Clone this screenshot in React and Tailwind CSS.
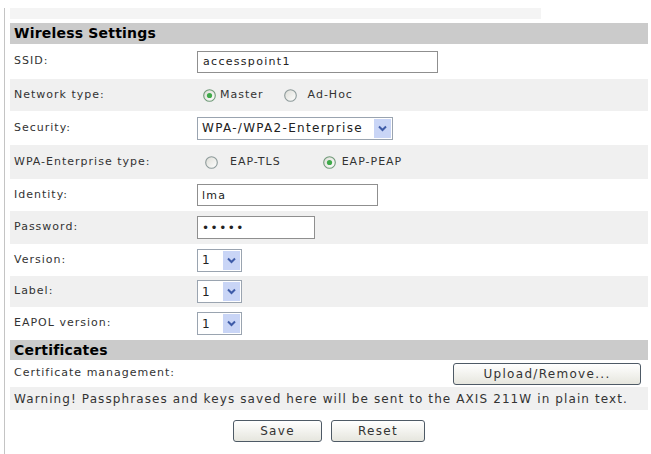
import React from 'react';

const font = { fontFamily: '"DejaVu Sans", Verdana, sans-serif' };

// XP style radio, drawn since native ones differ
const Radio = ({ checked }) => (
  <svg width="13" height="13" viewBox="0 0 13 13" className="shrink-0">
    <defs>
      <linearGradient id="rg" x1="0" y1="0" x2="1" y2="1">
        <stop offset="0" stopColor="#dcdcd6" />
        <stop offset="1" stopColor="#ffffff" />
      </linearGradient>
    </defs>
    <circle cx="6.5" cy="6.5" r="5.8" fill="url(#rg)" stroke={checked ? '#6f9a78' : '#8d9a9a'} strokeWidth="1.1" />
    {checked && <circle cx="6.5" cy="6.5" r="2.6" fill="#3faa4a" />}
  </svg>
);

const Select = ({ value, width }) => (
  <div className={`flex items-stretch h-[23px] border border-[#9aa4b0] bg-white ${width}`}>
    <span className="flex-1 flex items-center pl-[4px] text-[12px] tracking-[1.3px] text-[#222]">{value}</span>
    <span className="w-[17px] m-[1px] flex items-center justify-center bg-[#c9d5f6]">
      <svg width="9" height="7" viewBox="0 0 9 7">
        <path d="M1 1.5 L4.5 5 L8 1.5" fill="none" stroke="#3f5ca8" strokeWidth="2" />
      </svg>
    </span>
  </div>
);

const Button = ({ children, width }) => (
  <button className={`h-[22px] ${width} rounded-[3px] border border-[#4e5a66] bg-gradient-to-b from-white to-[#e6e6de] text-[12px] tracking-[1.3px] text-[#333]`}>
    {children}
  </button>
);

const Row = ({ label, shade, h, children }) => (
  <div className={`flex items-center ${h} ${shade ? 'bg-[#f0f0f0]' : 'bg-white'}`}>
    <div className="w-[187px] pl-[4px] text-[11px] tracking-[1px] text-[#333]">{label}</div>
    <div className="flex items-center">{children}</div>
  </div>
);

const Header = ({ children, h }) => (
  <div className={`flex items-center ${h} bg-[#cbcbcb] pl-[4px] text-[14px] font-bold tracking-[0.2px] text-black`}>
    {children}
  </div>
);

export default function App() {
  return (
    <div className="w-[651px] h-[454px] bg-white overflow-hidden" style={font}>
      <div className="ml-[4px] mt-[8px] h-[446px] border-l border-[#c4c4c4] pl-[5px] pr-[3px]">
        <div className="mt-[1px] h-[11px] w-[531px] bg-[#f4f4f4]" />
        <div className="mt-[4px]">
          <Header h="h-[21px]">Wireless Settings</Header>

          <Row label="SSID:" h="h-[35px]">
            <input
              readOnly
              value="accesspoint1"
              className="w-[241px] h-[22px] border border-[#8f8f8f] px-[5px] text-[11px] tracking-[1.3px] text-[#222] outline-none"
            />
          </Row>

          <Row label="Network type:" shade h="h-[32px]">
            <div className="flex items-center ml-[6px] text-[11px] tracking-[1px] text-[#333]">
              <Radio checked />
              <span className="ml-[4px]">Master</span>
              <span className="ml-[20px]"><Radio /></span>
              <span className="ml-[11px]">Ad-Hoc</span>
            </div>
          </Row>

          <Row label="Security:" h="h-[34px]">
            <Select value="WPA-/WPA2-Enterprise" width="w-[196px]" />
          </Row>

          <Row label="WPA-Enterprise type:" shade h="h-[34px]">
            <div className="flex items-center ml-[8px] text-[11px] tracking-[1px] text-[#333]">
              <Radio />
              <span className="ml-[12px]">EAP-TLS</span>
              <span className="ml-[42px]"><Radio checked /></span>
              <span className="ml-[6px]">EAP-PEAP</span>
            </div>
          </Row>

          <Row label="Identity:" h="h-[32px]">
            <input
              readOnly
              value="lma"
              className="w-[181px] h-[22px] border border-[#8f8f8f] px-[4px] text-[11px] tracking-[1.3px] text-[#222] outline-none"
            />
          </Row>

          <Row label="Password:" shade h="h-[33px]">
            <input
              readOnly
              type="password"
              value="abcde"
              className="w-[118px] h-[23px] border border-[#8f8f8f] bg-white px-[4px] text-[12px] tracking-[1.5px] text-[#222] outline-none"
            />
          </Row>

          <Row label="Version:" h="h-[32px]">
            <Select value="1" width="w-[45px]" />
          </Row>

          <Row label="Label:" shade h="h-[31px]">
            <Select value="1" width="w-[45px]" />
          </Row>

          <Row label="EAPOL version:" h="h-[33px]">
            <Select value="1" width="w-[45px]" />
          </Row>

          <Header h="h-[20px]">Certificates</Header>

          <div className="flex items-center justify-between h-[27px] pl-[4px] pr-[7px] text-[11px] tracking-[1px] text-[#333]">
            <span>Certificate management:</span>
            <Button width="w-[188px]">Upload/Remove...</Button>
          </div>

          <div className="flex items-center h-[23px] bg-[#f0f0f0] pl-[4px] text-[12px] tracking-[1.1px] text-[#333]">
            Warning! Passphrases and keys saved here will be sent to the AXIS 211W in plain text.
          </div>

          <div className="flex justify-center gap-[9px] mt-[10px]">
            <Button width="w-[89px]">Save</Button>
            <Button width="w-[94px]">Reset</Button>
          </div>
        </div>
      </div>
    </div>
  );
}
